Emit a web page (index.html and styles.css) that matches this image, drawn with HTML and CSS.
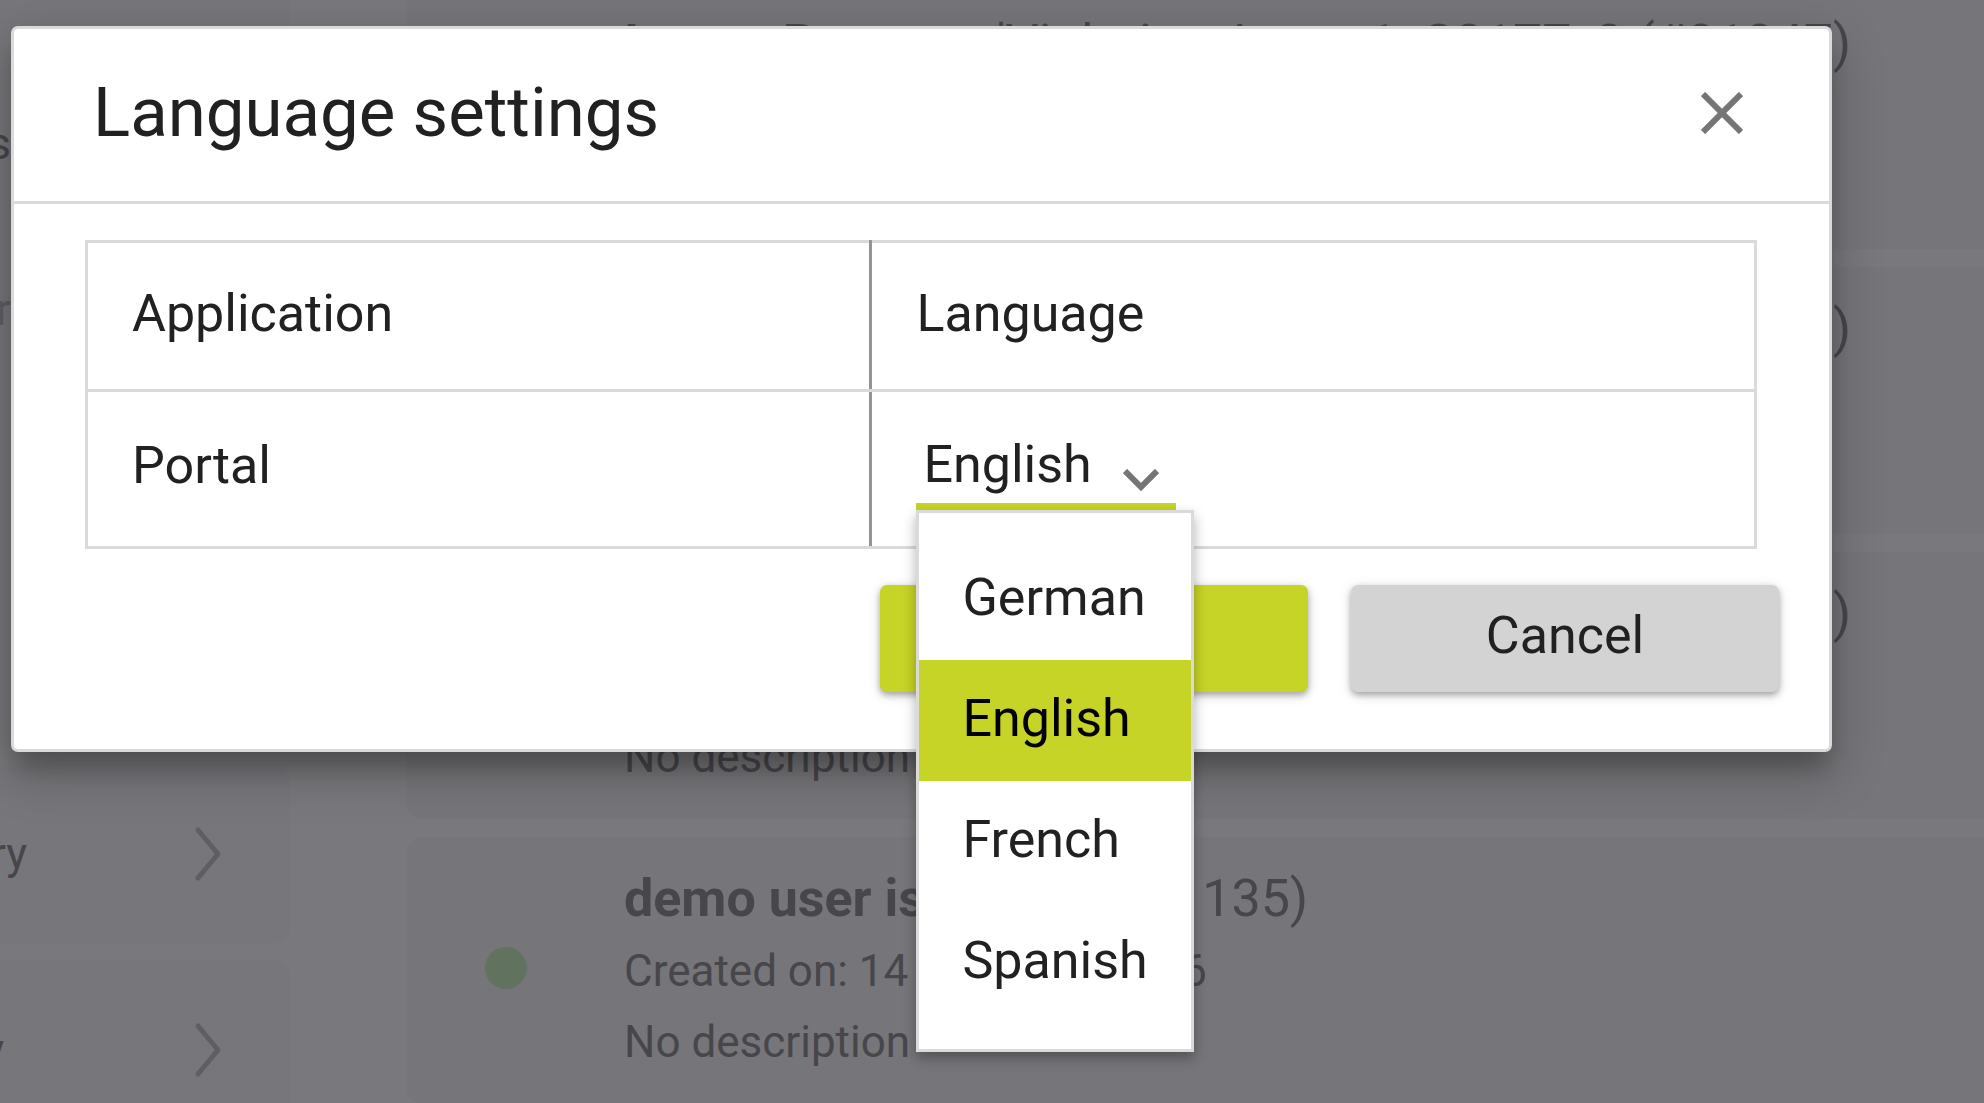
FILE: index.html
```html
<!DOCTYPE html>
<html lang="en">
<head>
  <meta charset="utf-8">
  <title>Language settings</title>
  <link rel="stylesheet" href="styles.css">
</head>
<body>
  <div class="page">
    <aside class="sidebar">
      <div class="side-panel">
        <span class="side-name">s</span>
        <span class="side-name side-muted">r</span>
      </div>
      <div class="side-card">
        <span class="side-name">ry</span>
        <svg class="side-arrow" viewBox="0 0 28 56" aria-hidden="true"><path d="M4 4 L24 28 L4 52"/></svg>
      </div>
      <div class="side-card">
        <span class="side-name side-short">y</span>
        <svg class="side-arrow" viewBox="0 0 28 56" aria-hidden="true"><path d="M4 4 L24 28 L4 52"/></svg>
      </div>
    </aside>
    <main class="list">
      <article class="card">
        <span class="dot"></span>
        <div class="card-text wide">
          <h2 class="card-title"><strong>Incom Request</strong><span>'Violation Asset 1_C0177_0 (#31347)</span></h2>
        </div>
      </article>
      <article class="card">
        <span class="dot"></span>
        <div class="card-text wide">
          <h2 class="card-title"><strong></strong><span>)</span></h2>
        </div>
      </article>
      <article class="card">
        <span class="dot"></span>
        <div class="card-text wide">
          <h2 class="card-title"><strong></strong><span>)</span></h2>
          <p class="card-line created">&nbsp;</p>
          <p class="card-line">No description</p>
        </div>
      </article>
      <article class="card">
        <span class="dot"></span>
        <div class="card-text">
          <h2 class="card-title"><strong>demo user is</strong><span>135)</span></h2>
          <p class="card-line created"><span>Created on: 14</span><span>6</span></p>
          <p class="card-line">No description</p>
        </div>
      </article>
    </main>
  </div>

  <div class="overlay">
    <section class="dialog" role="dialog" aria-labelledby="dialog-title">
      <header class="dialog-header">
        <h1 class="dialog-title" id="dialog-title">Language settings</h1>
        <button class="close" type="button" aria-label="Close">
          <svg class="close-icon" viewBox="0 0 42 42" aria-hidden="true"><path d="M2 2 L40 40 M40 2 L2 40"/></svg>
        </button>
      </header>
      <table class="settings">
        <thead>
          <tr><th scope="col">Application</th><th scope="col">Language</th></tr>
        </thead>
        <tbody>
          <tr>
            <td><label for="portal-language">Portal</label></td>
            <td>
              <div class="picker">
                <select class="picker-select" id="portal-language">
                  <option>German</option>
                  <option selected>English</option>
                  <option>French</option>
                  <option>Spanish</option>
                </select>
                <svg class="picker-arrow" viewBox="0 0 36 22" aria-hidden="true"><path d="M2 2 L18 18 L34 2"/></svg>
                <ul class="menu" role="listbox" aria-label="Language">
                  <li class="menu-item" role="option">German</li>
                  <li class="menu-item selected" role="option" aria-selected="true">English</li>
                  <li class="menu-item" role="option">French</li>
                  <li class="menu-item" role="option">Spanish</li>
                </ul>
              </div>
            </td>
          </tr>
        </tbody>
      </table>
      <footer class="dialog-footer">
        <button class="button primary" type="button">Save</button>
        <button class="button" type="button">Cancel</button>
      </footer>
    </section>
  </div>
</body>
</html>
```
FILE: styles.css
```css
* {
  box-sizing: border-box;
}

body {
  margin: 0;
  height: 100vh;
  overflow: hidden;
  background: #79787c;
  color: #212121;
  font-family: Roboto, "Liberation Sans", sans-serif;
  font-size: 52px;
  line-height: 60px;
}

h1, h2, p, ul {
  margin: 0;
  padding: 0;
  font-weight: 400;
}

/* Dimmed page behind the dialog */
.page {
  display: grid;
  grid-template-columns: 290px 1fr;
  column-gap: 117px;
  height: 100vh;
  overflow: hidden;
  color: #47464b;
}

.sidebar {
  display: flex;
  flex-direction: column;
  gap: 18px;
  font-size: 44px;
}

.side-panel {
  display: flex;
  flex-direction: column;
  gap: 106px;
  height: 747px;
  padding-top: 114px;
  background: #77767a;
}

.side-panel .side-name {
  width: 11px;
}

.side-card {
  display: flex;
  flex: none;
  align-items: center;
  justify-content: space-between;
  height: 178px;
  padding-right: 68px;
  border-radius: 0 16px 16px 0;
  background: #77767a;
}

.side-name {
  display: flex;
  justify-content: flex-end;
  width: 27px;
}

.side-short {
  width: 4px;
}

.side-muted {
  color: #5f5e62;
}

.side-arrow {
  width: 28px;
  height: 56px;
  fill: none;
  stroke: #5f5e62;
  stroke-width: 5;
  stroke-linecap: round;
  stroke-linejoin: round;
}

.list {
  display: flex;
  flex-direction: column;
  gap: 18px;
  margin-top: -18px;
}

.card {
  display: flex;
  flex: none;
  gap: 97px;
  height: 267px;
  padding: 32px 0 0 78px;
  border-radius: 16px 0 0 16px;
  background: #767579;
}

.dot {
  flex: none;
  width: 42px;
  height: 42px;
  margin-top: 78px;
  border-radius: 50%;
  background: #61735f;
}

.card-text {
  width: 684px;
}

.card-text.wide {
  width: 1227px;
}

.card-title,
.created {
  display: flex;
  justify-content: space-between;
  font-size: 52px;
  white-space: nowrap;
}

.card-line {
  padding-top: 11px;
  font-size: 44px;
}

.created {
  width: 583px;
  padding-top: 12px;
}

/* Dialog */
.overlay {
  position: fixed;
  inset: 0;
  padding: 26px 152px 0 11px;
}

.dialog {
  border: 3px solid #dadada;
  border-radius: 7px;
  background: #fff;
  box-shadow: 0 20px 24px -6px rgba(0, 0, 0, .24), 0 18px 50px 6px rgba(0, 0, 0, .2);
}

.dialog-header {
  display: flex;
  align-items: center;
  justify-content: space-between;
  padding: 42px 81px 46px 79px;
  border-bottom: 3px solid #dadada;
}

.dialog-title {
  font-size: 69px;
  line-height: 84px;
}

.close {
  display: flex;
  padding: 5px;
  border: 0;
  background: none;
}

.close-icon {
  width: 42px;
  height: 42px;
  fill: none;
  stroke: #757575;
  stroke-width: 6;
}

.settings {
  width: calc(100% - 143px);
  margin: 36px 0 0 71px;
  border-collapse: collapse;
  table-layout: fixed;
}

.settings th,
.settings td {
  padding: 41px 44px 45px;
  border: 3px solid #dadada;
  font-weight: 400;
  text-align: left;
  vertical-align: top;
}

.settings td {
  padding: 42px 44px 36px;
}

.settings td:first-child {
  padding-top: 44px;
}

.settings th:first-child,
.settings td:first-child {
  width: 47%;
  border-right-color: #949494;
}

.settings th:last-child,
.settings td:last-child {
  border-left-color: #949494;
}

.picker {
  position: relative;
  width: 260px;
}

.picker-select {
  display: block;
  width: 100%;
  height: 76px;
  padding: 0 0 7px 7px;
  border: 0;
  border-bottom: 7px solid #c6d327;
  border-radius: 0;
  appearance: none;
  background: none;
  color: inherit;
  font: inherit;
}

.picker-arrow {
  position: absolute;
  right: 17px;
  bottom: 19px;
  width: 36px;
  height: 22px;
  fill: none;
  stroke: #757575;
  stroke-width: 6;
}

.menu {
  position: absolute;
  top: 100%;
  left: 0;
  width: 278px;
  padding: 26px 0;
  border: 3px solid #dadada;
  background: #fff;
  box-shadow: 0 6px 12px rgba(0, 0, 0, .3);
  list-style: none;
}

.menu-item {
  padding: 29px 43px 32px;
}

.menu-item.selected {
  background: #c6d327;
  color: #000;
}

.dialog-footer {
  display: flex;
  justify-content: flex-end;
  gap: 43px;
  padding: 36px 50px 57px;
}

.button {
  width: 428px;
  height: 107px;
  padding: 0 0 5px;
  border: 0;
  border-radius: 7px;
  background: #d3d3d3;
  box-shadow: 0 3px 6px rgba(0, 0, 0, .3), 0 3px 14px rgba(0, 0, 0, .12);
  color: #212121;
  font: inherit;
}

.button.primary {
  background: #c6d327;
}
```
